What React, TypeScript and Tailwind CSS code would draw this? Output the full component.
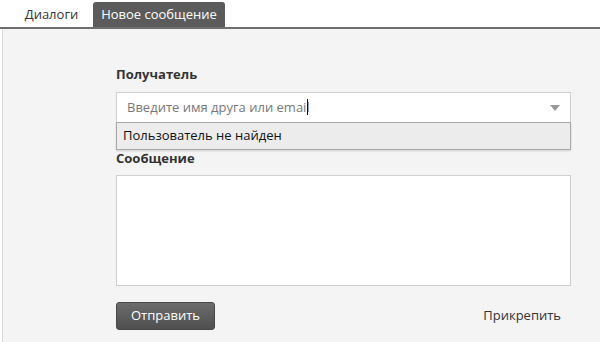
import React from 'react';

const App = () => {
  return (
    <div className="w-[600px] h-[342px] bg-white overflow-hidden text-[13px]" style={{ fontFamily: '"Open Sans", "Noto Sans", Arial, sans-serif' }}>
      {/* Tabs */}
      <div className="h-[29px] flex items-end border-b-2 border-[#6e6e6e]">
        <div className="w-[93px] h-[25px] flex items-center justify-center text-[#333]">
          <span className="pl-[10px]">Диалоги</span>
        </div>
        <div className="w-[132px] h-[25px] rounded-t-[3px] bg-[#5b5b5b] text-white flex items-center justify-center">
          Новое сообщение
        </div>
      </div>

      {/* Form */}
      <div className="ml-[2px] h-[313px] bg-[#f4f4f4] border-l border-[#dadada] pl-[113px] pr-[29px] pt-[35px]">
        <div className="font-bold text-[#333] leading-[20px] mb-[8px]">Получатель</div>

        <div className="relative">
          <div className="h-[31px] bg-white border border-[#cfcfcf] flex items-center justify-between pl-[10px] pr-[10px]">
            <span className="text-[#777]">
              Введите имя друга или emai
              <span className="relative">
                l
                <span className="absolute left-[1px] top-[1px] bottom-[1px] w-px bg-[#111]" />
              </span>
            </span>
            <svg width="10" height="6" viewBox="0 0 10 6">
              <path d="M0 0 H10 L5 6 Z" fill="#999" />
            </svg>
          </div>
          <div className="absolute left-0 right-0 top-[30px] h-[28px] bg-[#ececec] border border-[#a8a8a8] shadow-[0_1px_2px_rgba(0,0,0,0.15)] flex items-center pl-[6px] text-[#111] z-10">
            Пользователь не найден
          </div>
        </div>

        <div className="font-bold text-[#333] leading-[20px] mt-[25px] mb-[7px]">Сообщение</div>
        <div className="h-[111px] bg-white border border-[#cfcfcf]" />

        <div className="mt-[16px] flex items-center justify-between pr-[10px]">
          <button className="w-[99px] h-[28px] rounded-[3px] border border-[#474747] bg-gradient-to-b from-[#6c6c6c] to-[#4f4f4f] text-white">
            Отправить
          </button>
          <span className="text-[#333]">Прикрепить</span>
        </div>
      </div>
    </div>
  );
};

export default App;
